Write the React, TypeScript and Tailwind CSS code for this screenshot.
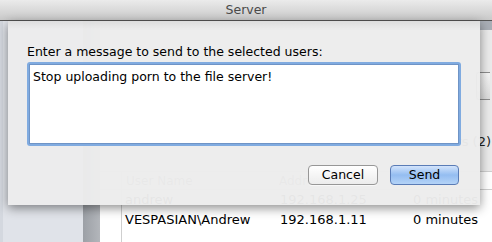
import React from "react";

export default function App() {
  const font = { fontFamily: '"DejaVu Sans", "Liberation Sans", sans-serif' };
  return (
    <div className="relative w-[492px] h-[242px] overflow-hidden bg-white text-[12px] text-black" style={font}>
      {/* Title bar */}
      <div className="h-[21px] flex items-center justify-center border-b border-[#555] bg-gradient-to-b from-[#ebebeb] to-[#c9c9c9] text-[12.5px] text-[#4a4a4a]">
        Server
      </div>
      {/* Background window body */}
      <div className="flex h-[221px]">
        <div className="w-[83px] bg-[#e0e3e9] border-l-[3px] border-[#d4d8df]" />
        <div className="w-[17px] bg-gradient-to-r from-[#9ca0a6] to-[#b3b6bb]" />
        <div className="flex-1 flex flex-col bg-white">
          <div className="h-[9px] shrink-0 bg-[#a9aeb6]" />
          <div className="h-[142px] shrink-0 bg-[#ebebeb] flex flex-col border-b border-[#cfcfcf]">
            <div className="flex justify-end pt-[42px] pr-[2px]">
              <div className="w-[14px] h-[28px] rounded-l-[3px] border border-r-0 border-[#8e8e8e] bg-gradient-to-b from-[#f6f6f6] to-[#dcdcdc]" />
            </div>
            <div className="flex justify-end pt-[32px] pr-[1px] text-[13px] text-[#222]">Users (2)</div>
          </div>
          <div className="flex flex-col shrink-0 text-[13px]">
            <div className="flex h-[18px] items-center border-b border-[#cfcfcf] text-[#666] text-[12px]">
              <div className="w-[22px] h-full border-r border-[#cfcfcf]" />
              <div className="w-[155px] pl-[4px]">User Name</div>
              <div className="w-[133px] pl-[2px]">Address</div>
              <div className="flex-1 pl-[3px]">Idle</div>
            </div>
            <div className="flex h-[20px] items-center">
              <div className="w-[22px] h-full border-r border-[#cfcfcf]" />
              <div className="w-[155px] pl-[3px]">andrew</div>
              <div className="w-[133px] pl-[3px]">192.168.1.25</div>
              <div className="flex-1 pl-[3px]">0 minutes</div>
            </div>
            <div className="flex h-[20px] items-center">
              <div className="w-[22px] h-full border-r border-[#cfcfcf]" />
              <div className="w-[155px] pl-[3px]">VESPASIAN\Andrew</div>
              <div className="w-[133px] pl-[3px]">192.168.1.11</div>
              <div className="flex-1 pl-[3px]">0 minutes</div>
            </div>
            <div className="flex h-[20px]">
              <div className="w-[22px] h-full border-r border-[#cfcfcf]" />
            </div>
          </div>
        </div>
      </div>

      {/* Sheet */}
      <div className="absolute left-[8px] top-[21px] w-[472px] h-[184px] bg-[#ececec]/[0.97] shadow-[0_3px_10px_rgba(0,0,0,0.45)] flex flex-col px-[19px]">
        <div className="absolute inset-x-0 top-0 h-[8px] bg-gradient-to-b from-black/[0.06] to-transparent" />
        <div className="pt-[23px] h-[39px] leading-[16px] text-[12.5px] text-black">
          Enter a message to send to the selected users:
        </div>
        <div className="mt-[2px] h-[84px] w-[434px] rounded-[3px] bg-[#80abe0] p-[2px]">
          <div className="h-full w-full bg-white border border-[#6f94c6] px-[3px] pt-[4px] leading-[16px] text-[12.5px]">
            Stop uploading porn to the file server!
          </div>
        </div>
        <div className="flex justify-end gap-[12px] mt-[19px] pr-[2px]">
          <div className="w-[70px] h-[20px] rounded-[4px] border border-[#979797] bg-gradient-to-b from-white to-[#ececec] flex items-center justify-center text-[12.5px] shadow-[0_1px_0_rgba(255,255,255,0.6)]">
            Cancel
          </div>
          <div className="w-[69px] h-[20px] rounded-[4px] border border-[#5a7cb6] bg-gradient-to-b from-[#d3e4fb] via-[#94bdf1] to-[#b4d3f7] flex items-center justify-center text-[12.5px]">
            Send
          </div>
        </div>
      </div>
    </div>
  );
}
